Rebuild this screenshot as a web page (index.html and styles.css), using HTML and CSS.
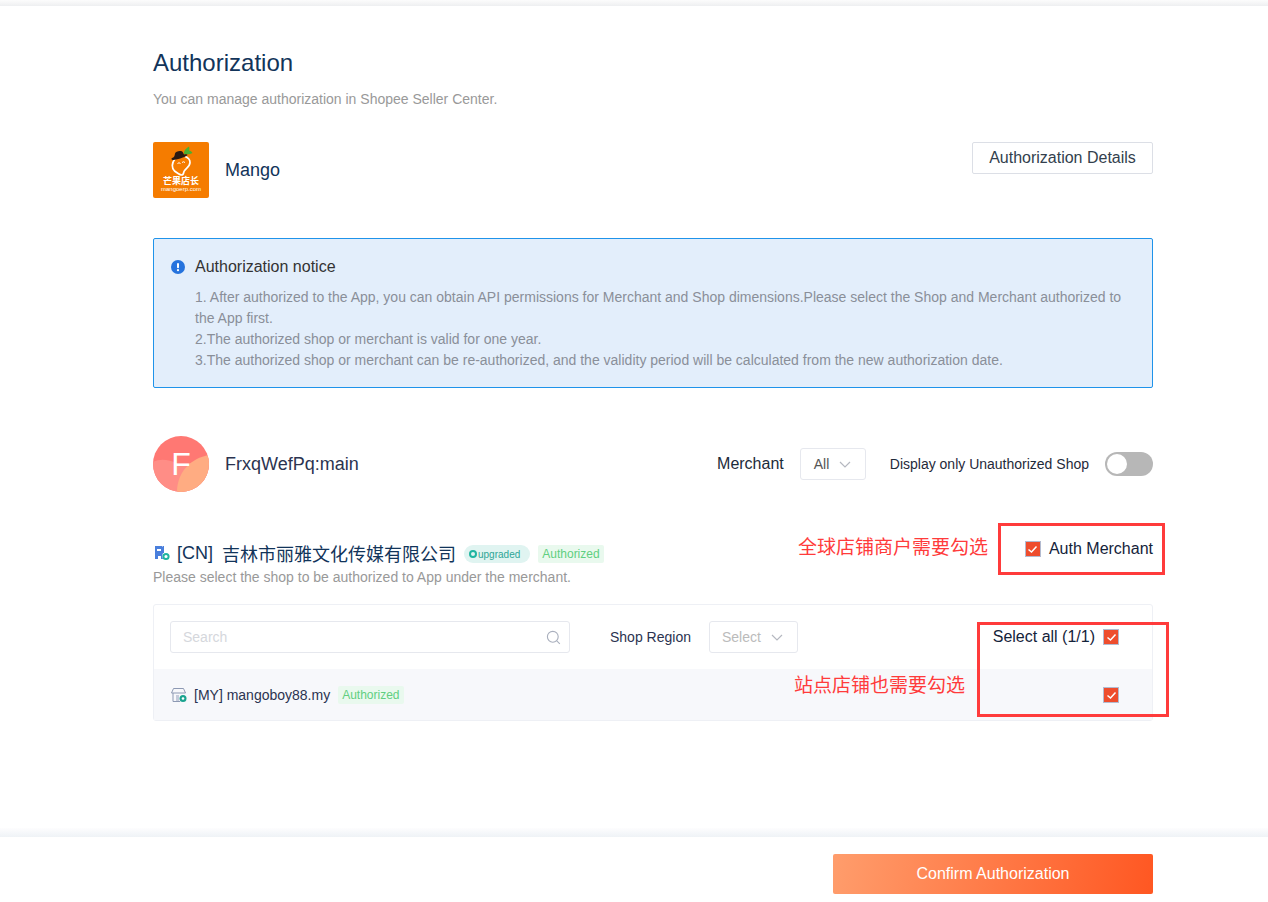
FILE: index.html
```html
<!DOCTYPE html>
<html lang="en">
<head>
<meta charset="utf-8">
<title>Authorization</title>
<link rel="stylesheet" href="styles.css">
</head>
<body>
<div class="top-shade"></div>
<main class="page">
  <h1 class="title">Authorization</h1>
  <p class="subtitle">You can manage authorization in Shopee Seller Center.</p>

  <section class="app-row">
    <div class="logo">
      <svg class="logo-art" width="56" height="56" viewBox="0 0 56 56">
        <path d="M31 10 C32 7 34 6 36 4.5 C36.500 6 36.500 7 36 8.500 C37.500 8.500 38.500 9.500 39.500 11 C37 12.500 34 12.500 31 12 Z" fill="#4caf2f"/>
        <path d="M22 17 C18.500 21 18.500 26 21.500 29 C24 31 26 32.500 28.500 33 C30.500 33 30.500 31 31 29.500 C32 26.500 37 25 37 20.500 C37 18 35 15.500 32 14.500" fill="none" stroke="#fff" stroke-width="1.7"/>
        <path d="M19 16 C21 15.500 21.500 14.500 22 11.500 C22.500 9 29 8 30 10.500 L31 12.500 C33 12 34.500 12 34.500 13 C33 15 25 17.500 20 18 C18.500 18 18 16.500 19 16 Z" fill="#2a1a12"/>
        <path d="M24.500 21.500 q1.500 -1.500 3 0 M29 20.500 q1.500 -1.500 3 0" fill="none" stroke="#fff" stroke-width="1"/>
      </svg>
      <span class="logo-name">芒果店长</span>
      <span class="logo-url">mangoerp.com</span>
    </div>
    <span class="app-name">Mango</span>
    <button class="details-btn">Authorization Details</button>
  </section>

  <section class="notice">
    <div class="notice-head">
      <svg width="14" height="14" viewBox="0 0 14 14"><circle cx="7" cy="7" r="7" fill="#2673dd"/><rect x="6" y="3" width="2" height="5.2" rx="1" fill="#fff"/><circle cx="7" cy="10.2" r="1.1" fill="#fff"/></svg>
      <span>Authorization notice</span>
    </div>
    <div class="notice-body">
      <p>1. After authorized to the App, you can obtain API permissions for Merchant and Shop dimensions.Please select the Shop and Merchant authorized to the App first.</p>
      <p>2.The authorized shop or merchant is valid for one year.</p>
      <p>3.The authorized shop or merchant can be re-authorized, and the validity period will be calculated from the new authorization date.</p>
    </div>
  </section>

  <section class="merchant-row">
    <div class="avatar">
      <svg class="avatar-art" width="56" height="56" viewBox="0 0 56 56">
        <rect width="56" height="56" fill="#ff7873"/>
        <path d="M0 26 C8 22 16 24 24 27 C32 30 44 24 56 25 L56 56 L0 56 Z" fill="#ff8d86"/>
        <path d="M24 56 C24 36 38 22 56 19 L56 56 Z" fill="#ffac82"/>
      </svg>
      <span class="avatar-letter">F</span>
    </div>
    <span class="merchant-name">FrxqWefPq:main</span>
    <div class="merchant-filters">
      <span class="filter-label">Merchant</span>
      <div class="select select-all"><span>All</span>
        <svg width="12" height="7" viewBox="0 0 12 7"><path d="M1 1 L6 6 L11 1" fill="none" stroke="#b5b8c0" stroke-width="1.2"/></svg>
      </div>
      <span class="toggle-label">Display only Unauthorized Shop</span>
      <span class="toggle"><span class="knob"></span></span>
    </div>
  </section>

  <section class="shop-head">
    <div class="shop-info">
      <div class="shop-line">
        <svg class="shop-icon" width="16" height="16" viewBox="0 0 16 16">
          <path d="M1 1 H8 V2 L9 1 H10 V8 H9 C8 10 8 12 9 14 H7 V11 H4 V14 H1 Z" fill="#4a7fdc"/>
          <rect x="3" y="4" width="4" height="2" fill="#fff"/>
          <circle cx="12" cy="11.500" r="2.600" fill="none" stroke="#1fb5a0" stroke-width="2"/>
        </svg>
        <span class="shop-code">[CN]</span>
        <span class="shop-cn">吉林市丽雅文化传媒有限公司</span>
        <span class="tag-upgraded"><i class="dot"></i>upgraded</span>
        <span class="tag-auth tag-head">Authorized</span>
      </div>
      <p class="shop-hint">Please select the shop to be authorized to App under the merchant.</p>
    </div>
    <label class="auth-merchant">
      <span class="check"><svg width="11" height="9" viewBox="0 0 11 9"><path d="M1.5 4.5 L4.5 7 L9.5 1.5" fill="none" stroke="#fff" stroke-width="1.5"/></svg></span>
      <span>Auth Merchant</span>
    </label>
  </section>

  <section class="shops">
    <div class="shops-bar">
      <div class="search">
        <span>Search</span>
        <svg width="15" height="15" viewBox="0 0 15 15"><circle cx="6.8" cy="6.8" r="5.4" fill="none" stroke="#a9afbd" stroke-width="1.1"/><path d="M10.8 10.8 L13.8 13.8" stroke="#a9afbd" stroke-width="1.1"/></svg>
      </div>
      <span class="region-label">Shop Region</span>
      <div class="select select-region"><span>Select</span>
        <svg width="12" height="7" viewBox="0 0 12 7"><path d="M1 1 L6 6 L11 1" fill="none" stroke="#b5b8c0" stroke-width="1.2"/></svg>
      </div>
      <div class="select-all-box">
        <span>Select all (1/1)</span>
        <span class="check"><svg width="11" height="9" viewBox="0 0 11 9"><path d="M1.5 4.5 L4.5 7 L9.5 1.5" fill="none" stroke="#fff" stroke-width="1.5"/></svg></span>
      </div>
    </div>
    <div class="shop-row">
      <svg class="store-icon" width="16" height="16" viewBox="0 0 16 16">
        <path d="M2.5 1.5 H12.5 L14.5 6 H0.5 Z" fill="none" stroke="#8d99b3" stroke-width="1"/>
        <path d="M2 6 V14.5 H9" fill="none" stroke="#8d99b3" stroke-width="1"/>
        <path d="M5 8 H8 V14 H5 Z" fill="#c5cbdb"/>
        <circle cx="12" cy="11.5" r="3.5" fill="#1aa38f"/>
        <circle cx="12" cy="11.5" r="1.3" fill="#fff"/>
      </svg>
      <span class="row-name">[MY] mangoboy88.my</span>
      <span class="tag-auth tag-row">Authorized</span>
      <span class="check row-check"><svg width="11" height="9" viewBox="0 0 11 9"><path d="M1.5 4.5 L4.5 7 L9.5 1.5" fill="none" stroke="#fff" stroke-width="1.5"/></svg></span>
    </div>
  </section>
</main>

<div class="mark mark-merchant"></div>
<div class="mark mark-shops"></div>
<div class="note note-merchant">全球店铺商户需要勾选</div>
<div class="note note-shops">站点店铺也需要勾选</div>

<footer class="footer">
  <button class="confirm">Confirm Authorization</button>
</footer>
</body>
</html>
```
FILE: styles.css
```css
* { box-sizing: border-box; }
html, body { margin: 0; height: 902px; overflow: hidden; }
body {
  position: relative;
  background: #fff;
  font-family: "Liberation Sans", "Noto Sans CJK SC", sans-serif;
  color: #0e2a47;
}
p { margin: 0; }
.top-shade { height: 6px; background: linear-gradient(#fcfcfc, #eeeff1); }
.page { width: 1000px; margin-left: 153px; }

.title { margin: 41px 0 0; font-size: 24px; font-weight: 400; line-height: 32px; color: #12345a; }
.subtitle { margin-top: 11px; font-size: 14px; line-height: 18px; color: #999; }

.app-row { display: flex; align-items: flex-start; margin-top: 34px; height: 56px; }
.logo {
  position: relative; width: 56px; height: 56px; flex: none;
  display: flex; flex-direction: column; align-items: center; justify-content: flex-end;
  background: #f57c00; border-radius: 2px; color: #fff; padding-bottom: 6px;
}
.logo-art { position: absolute; left: 0; top: 0; }
.logo-name { font-size: 9px; line-height: 9px; font-weight: 700; }
.logo-url { font-size: 6px; line-height: 6px; }
.app-name { margin-left: 16px; font-size: 18px; line-height: 56px; color: #12345a; }
.details-btn {
  margin-left: auto; width: 181px; height: 32px; padding: 0;
  background: #fff; border: 1px solid #dcdfe6; border-radius: 2px;
  font: 16px "Liberation Sans", sans-serif; color: #333f4d;
}

.notice {
  margin-top: 40px; height: 150px; padding: 17px 17px 0;
  background: #e3eefb; border: 1px solid #1f93ea; border-radius: 2px;
}
.notice-head { display: flex; align-items: center; gap: 10px; font-size: 16px; line-height: 22px; color: #333; }
.notice-body { margin: 9px 0 0 24px; font-size: 14px; line-height: 21px; color: #8a8f99; }

.merchant-row { display: flex; align-items: center; margin-top: 48px; height: 56px; }
.avatar {
  position: relative; width: 56px; height: 56px; flex: none; overflow: hidden; border-radius: 50%;
  display: flex; align-items: center; justify-content: center;
}
.avatar-art { position: absolute; left: 0; top: 0; }
.avatar-letter { position: relative; font-size: 32px; color: #fff; }
.merchant-name { margin-left: 16px; font-size: 18px; color: #2b3350; }
.merchant-filters { display: flex; align-items: center; margin-left: auto; }
.filter-label { font-size: 16px; color: #1c2b3a; }
.select {
  display: flex; align-items: center; height: 32px;
  border: 1px solid #e6e8ee; border-radius: 3px; font-size: 14px;
}
.select-all { width: 66px; margin-left: 16px; padding-left: 13px; gap: 10px; color: #555; }
.toggle-label { margin-left: 24px; font-size: 14px; color: #1f2a3a; }
.toggle { width: 48px; height: 24px; margin-left: 16px; padding: 2px; border-radius: 12px; background: #b7b7b7; display: flex; }
.knob { width: 20px; height: 20px; border-radius: 50%; background: #fff; }

.shop-head { display: flex; justify-content: space-between; align-items: flex-start; margin-top: 50px; }
.shop-line { display: flex; align-items: center; height: 22px; }
.shop-icon { margin-left: 1px; }
.shop-code { margin-left: 7px; font-size: 18px; color: #12345a; }
.shop-cn { margin-left: 9px; font-size: 18px; color: #12345a; }
.tag-upgraded {
  display: flex; align-items: center; gap: 1px; height: 18px; margin: 2px 0 0 8px; padding: 0 10px 0 5px;
  border-radius: 9px; background: #e0f4f1; color: #2fa596; font-size: 10px;
}
.dot { width: 8px; height: 8px; border: 2px solid #1fb5a0; border-radius: 50%; }
.tag-auth {
  display: inline-block; height: 18px; margin-left: 8px; padding: 0 4px; line-height: 18px;
  background: #e9f9ee; border-radius: 2px; color: #5fcf80; font-size: 12px;
}
.tag-head { margin-top: 2px; }
.shop-hint { margin-top: 4px; font-size: 14px; line-height: 18px; color: #999; }
.auth-merchant { display: flex; align-items: center; gap: 8px; height: 22px; margin-top: -4px; font-size: 16px; color: #14233a; }
.check {
  display: flex; align-items: center; justify-content: center; flex: none;
  width: 16px; height: 16px; background: #ee4d2d; box-shadow: 0 0 0 1px #b3bbd0 inset;
}

.shops { margin-top: 18px; border: 1px solid #eef0f5; border-radius: 3px; height: 117px; }
.shops-bar { display: flex; align-items: center; height: 64px; padding: 0 33px 0 16px; }
.search {
  display: flex; align-items: center; justify-content: space-between;
  width: 400px; height: 32px; padding: 0 8px 0 12px;
  border: 1px solid #e6e8ee; border-radius: 3px; font-size: 14px; color: #d5d7dc;
}
.region-label { margin-left: 40px; font-size: 14px; color: #2b3350; }
.select-region { width: 89px; margin-left: 18px; padding-left: 12px; gap: 10px; color: #bbb; }
.select-all-box { display: flex; align-items: center; gap: 8px; margin-left: auto; font-size: 16px; color: #14233a; }
.shop-row { display: flex; align-items: center; height: 51px; padding: 0 33px 0 17px; background: #f7f8fb; }
.row-name { margin-left: 7px; font-size: 14px; color: #2b3350; }
.tag-row { margin-left: 8px; }
.row-check { margin-left: auto; margin-top: 1px; }

.mark { position: absolute; border: 3px solid #ff3b3b; }
.mark-merchant { left: 998px; top: 523px; width: 167px; height: 52px; }
.mark-shops { left: 977px; top: 622px; width: 192px; height: 95px; }
.note { position: absolute; font-size: 19px; line-height: 24px; color: #ff3b3b; white-space: nowrap; }
.note-merchant { left: 798px; top: 536px; }
.note-shops { left: 794px; top: 674px; }

.footer {
  position: absolute; left: 0; right: 0; top: 828px; height: 74px;
  display: flex; justify-content: flex-end; align-items: flex-start;
  padding: 26px 115px 0 0;
  background: linear-gradient(#fdfdfe, #eef2f6 9.5px, #fff 9.5px);
}
.confirm {
  width: 320px; height: 40px; padding: 0; border: 0; border-radius: 2px;
  background: linear-gradient(100deg, #ff9d6c, #ff5722);
  color: #fff; font: 16px "Liberation Sans", sans-serif;
}
```
